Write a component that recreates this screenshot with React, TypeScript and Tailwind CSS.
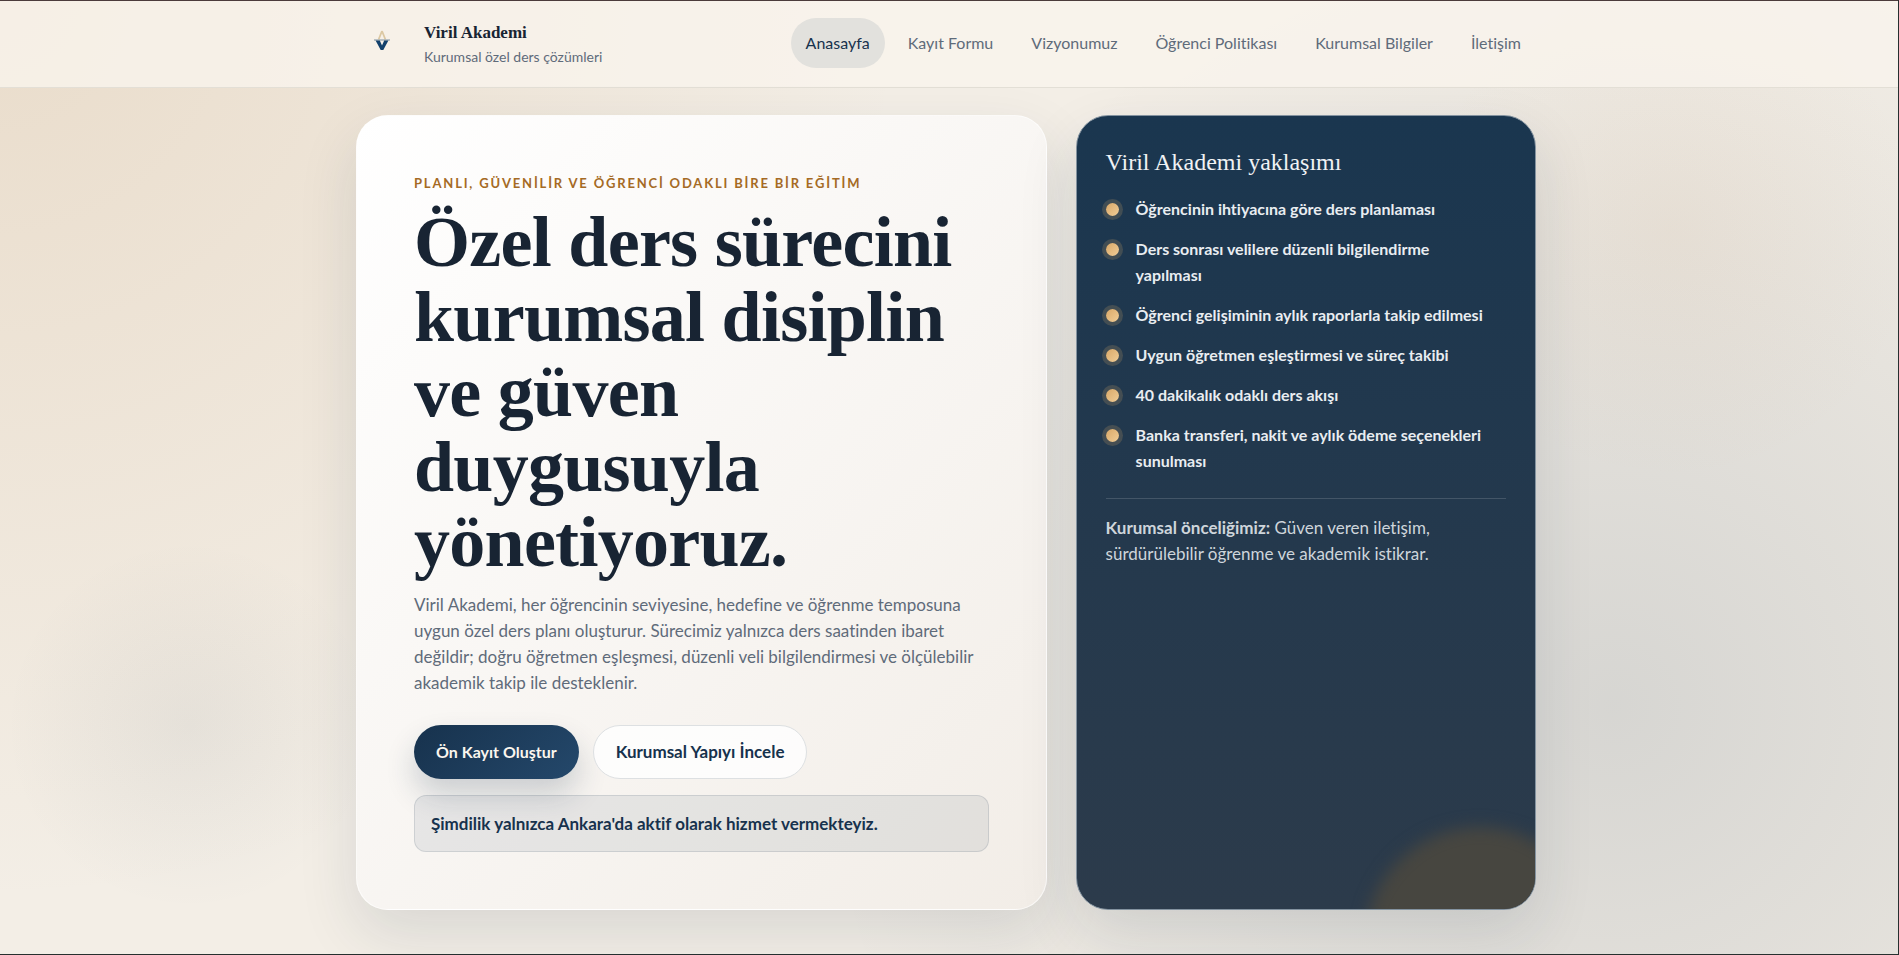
import clsx from "clsx";

const navItems = [
  { label: "Anasayfa", href: "#anasayfa", active: true },
  { label: "Kayıt Formu", href: "#kayit-formu" },
  { label: "Vizyonumuz", href: "#vizyonumuz" },
  { label: "Öğrenci Politikası", href: "#ogrenci-politikasi" },
  { label: "Kurumsal Bilgiler", href: "#kurumsal-bilgiler" },
  { label: "İletişim", href: "#iletisim" },
];

const approach = [
  "Öğrencinin ihtiyacına göre ders planlaması",
  "Ders sonrası velilere düzenli bilgilendirme yapılması",
  "Öğrenci gelişiminin aylık raporlarla takip edilmesi",
  "Uygun öğretmen eşleştirmesi ve süreç takibi",
  "40 dakikalık odaklı ders akışı",
  "Banka transferi, nakit ve aylık ödeme seçenekleri sunulması",
];

const Logo = () => (
  <span className="flex size-[52px] shrink-0 items-center justify-center">
    <svg width="18" height="30" viewBox="0 0 18 30" aria-hidden="true">
      <path d="M9 2 L5.6 10.5 M9 2 L12.4 10.5" stroke="#dcc8a2" strokeWidth="1.8" fill="none" />
      <path d="M1 11 H17" stroke="#9aa7b1" strokeWidth="1.3" />
      <path d="M2.6 11.5 H6.8 L9 16.4 L11.2 11.5 H15.4 L10.3 21 H7.7 Z" fill="#12406b" />
    </svg>
  </span>
);

const Header = () => (
  <header className="border-t border-b border-t-[#4b3b3b] border-b-[#e3dfd6] bg-[#f9f4ec]/80 pr-[6px]">
    <div className="mx-auto flex h-[86px] max-w-[1180px] items-center justify-between">
      <a href="#anasayfa" className="flex items-center gap-4">
        <Logo />
        <span className="flex flex-col pt-[2px]">
          <strong className="font-['Liberation_Serif',serif] text-[17px] leading-6 font-bold text-[#182433]">
            Viril Akademi
          </strong>
          <span className="text-sm leading-6 text-[#5f6b7a]">Kurumsal özel ders çözümleri</span>
        </span>
      </a>
      <nav className="flex items-center gap-2 pb-[2px]">
        {navItems.map((item) => (
          <a
            key={item.label}
            href={item.href}
            className={clsx(
              "rounded-full px-[15px] py-3 text-base leading-[26px]",
              item.active ? "bg-[#e2e1dd] text-[#17324d]" : "text-[#5f6b7a]"
            )}
          >
            {item.label}
          </a>
        ))}
      </nav>
    </div>
  </header>
);

const Hero = () => (
  <section className="rounded-[32px] border border-white/70 bg-linear-135 from-white to-[#f2ede7] p-[57px] shadow-[0_24px_60px_rgba(23,50,77,0.12)]">
    <p className="text-[13px] leading-5 font-bold tracking-[0.14em] text-[#a56a24]">
      PLANLI, GÜVENİLİR VE ÖĞRENCİ ODAKLI BİRE BİR EĞİTİM
    </p>
    <h1 className="mt-3 font-['Liberation_Serif',serif] text-[72px] leading-[75px] font-bold tracking-[-0.01em] text-[#182433]">
      Özel ders sürecini kurumsal disiplin ve güven duygusuyla yönetiyoruz.
    </h1>
    <p className="mt-3 text-[17px] leading-[26px] text-[#5f6b7a]">
      Viril Akademi, her öğrencinin seviyesine, hedefine ve öğrenme temposuna uygun özel ders planı
      oluşturur. Sürecimiz yalnızca ders saatinden ibaret değildir; doğru öğretmen eşleşmesi, düzenli
      veli bilgilendirmesi ve ölçülebilir akademik takip ile desteklenir.
    </p>
    <div className="mt-[29px] flex flex-wrap gap-[14px]">
      <button
        type="button"
        className="rounded-full bg-linear-135 from-[#17324d] to-[#24486b] px-[22px] py-[14px] text-base leading-[26px] font-bold text-[#fbf6ee] shadow-[0_16px_30px_rgba(23,50,77,0.2)]"
      >
        Ön Kayıt Oluştur
      </button>
      <button
        type="button"
        className="rounded-full border border-[#dde0e2] bg-white/80 px-[22px] py-[13px] text-[17px] leading-[26px] font-bold text-[#17324d]"
      >
        Kurumsal Yapıyı İncele
      </button>
    </div>
    <p className="mt-4 rounded-xl border border-[#17324d]/12 bg-[#17324d]/8 px-4 py-[14px] text-[17px] leading-[27px] font-bold text-[#17324d]">
      Şimdilik yalnızca Ankara'da aktif olarak hizmet vermekteyiz.
    </p>
  </section>
);

const Approach = () => (
  <aside className="relative overflow-hidden rounded-[32px] border border-[#8493a0] bg-linear-to-b from-[#1a364f] to-[#2c3b4b] p-[29px] shadow-[0_24px_60px_rgba(23,50,77,0.12)]">
    <h2 className="font-['Liberation_Serif',serif] text-2xl leading-[34px] text-[#f0f2f4]">Viril Akademi yaklaşımı</h2>
    <ul className="mt-[17px] flex flex-col gap-[14px]">
      {approach.map((text) => (
        <li key={text} className="flex gap-[17px] text-base leading-[26px] font-bold text-[#e9edf1]">
          <span className="mt-[7px] size-[13px] shrink-0 rounded-full bg-linear-135 from-[#d9a868] to-[#f0cd96] ring-4 ring-[#d9a868]/20" />
          <span className="max-w-[360px]">{text}</span>
        </li>
      ))}
    </ul>
    <p className="mt-6 border-t border-white/15 pt-4 text-[17px] leading-[26px] text-[#ced5db]">
      <strong>Kurumsal önceliğimiz:</strong> Güven veren iletişim, sürdürülebilir öğrenme ve akademik istikrar.
    </p>
    <div className="absolute -right-[60px] -bottom-[148px] size-[230px] rounded-full bg-[#474640] blur-[8px]" />
  </aside>
);

export default function App() {
  return (
    <div className="min-h-screen border-r border-b border-[#26302f] bg-[#f3eee6] bg-[radial-gradient(circle_at_10%_76%,rgba(23,50,77,0.055),transparent_185px),radial-gradient(circle_at_88%_24%,rgba(200,140,80,0.07),transparent_250px),radial-gradient(circle_at_85%_74%,rgba(23,50,77,0.13),transparent_800px),radial-gradient(circle_at_0_0,rgba(190,140,80,0.18),transparent_900px)] font-[Lato,sans-serif] [font-variant-ligatures:none]">
      <Header />
      <main className="pt-[27px] pr-[6px] pb-11">
        <div className="mx-auto grid max-w-[1180px] grid-cols-[3fr_2fr] gap-[29px]">
          <Hero />
          <Approach />
        </div>
      </main>
    </div>
  );
}
